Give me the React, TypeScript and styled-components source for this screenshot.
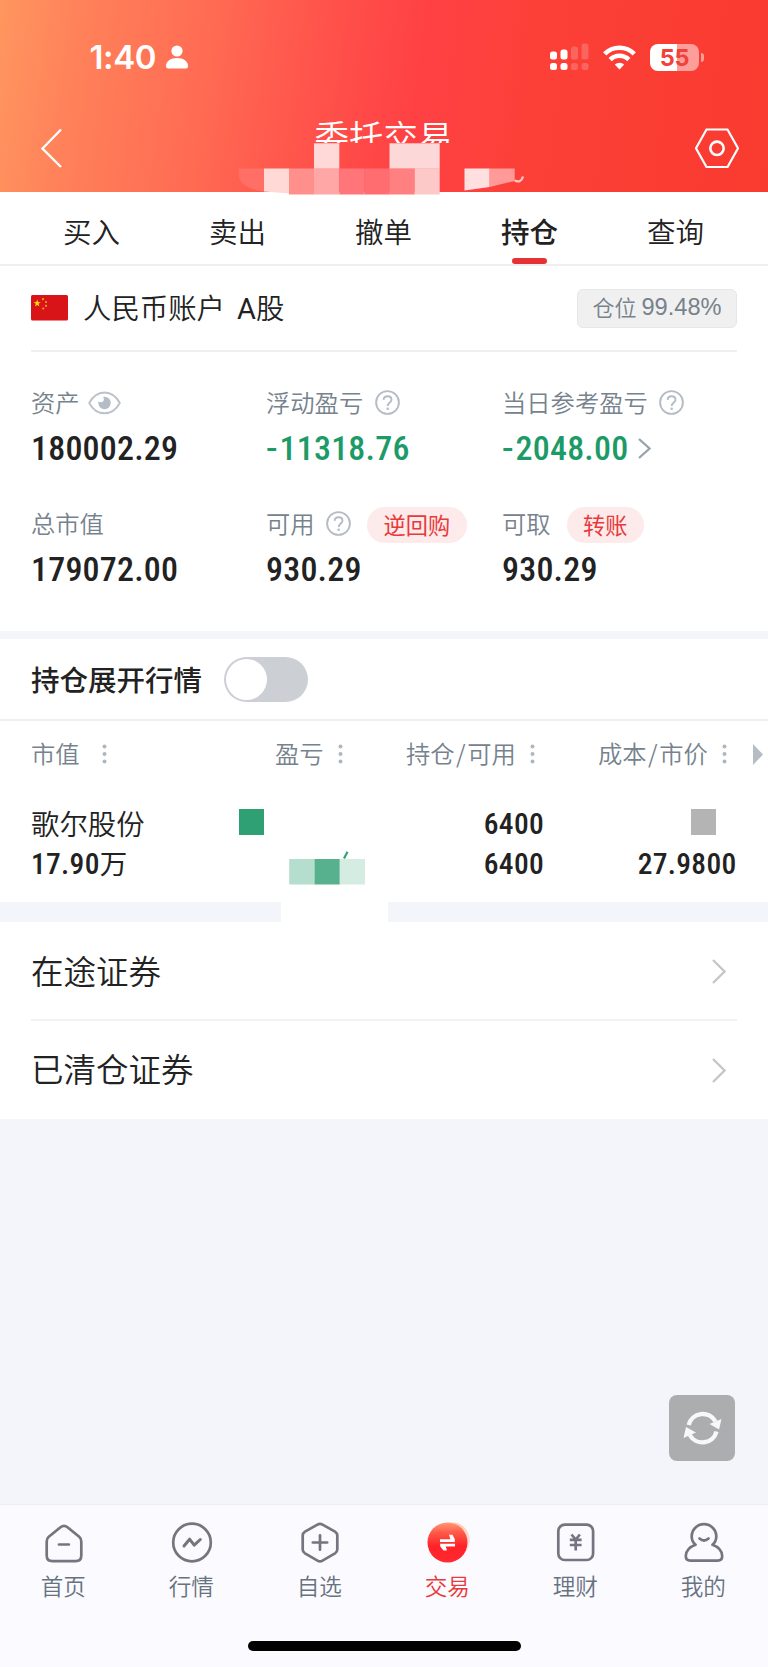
import React from 'react';
import styled, { createGlobalStyle } from 'styled-components';

const CJK = '"Noto Sans CJK SC", sans-serif';
const DIGITS = 'Roboto, "Noto Sans CJK SC", sans-serif';

const GlobalStyle = createGlobalStyle`
  * { box-sizing: border-box; }
  body { margin: 0; background: #f4f5fa; font-family: ${CJK}; color: #222; }
  svg { display: block; flex: none; }
`;

const Screen = styled.main`
  width: 768px;
  height: 1667px;
  display: flex;
  flex-direction: column;
  overflow: hidden;
  background: #f4f5fa;
`;

/* ---------- header ---------- */
const Header = styled.header`
  position: relative;
  height: 192px;
  flex: none;
  background: linear-gradient(98deg, #ff965f 0%, #ff825a 10%, #ff6b53 27%, #ff534b 41%, #ff4144 54%, #fc4038 68%, #f93a2f 100%);
  color: #fff;
`;

const StatusBar = styled.div`
  height: 104px;
  padding: 10.5px 64px 0 89.5px;
  display: flex;
  align-items: center;
  justify-content: space-between;
`;

const StatusGroup = styled.div<{ $gap: number }>`
  display: flex;
  align-items: center;
  gap: ${p => p.$gap}px;
`;

const Clock = styled.span`
  font: 600 33px/40px Inter, sans-serif;
  width: 67.5px;
  letter-spacing: -0.4px;
`;

const Battery = styled.div`
  display: flex;
  align-items: center;
  gap: 2px;
`;

const BatteryBody = styled.div`
  width: 49px;
  height: 27px;
  border-radius: 8px;
  background: linear-gradient(90deg, #fff 55%, rgba(255, 255, 255, 0.5) 55%);
  color: #f2403a;
  font: 700 23.5px/27px Inter, sans-serif;
  letter-spacing: -0.3px;
  text-align: center;
`;

const BatteryTip = styled.div`
  width: 3px;
  height: 9px;
  border-radius: 0 3px 3px 0;
  background: rgba(255, 255, 255, 0.5);
`;

const NavBar = styled.div`
  height: 88px;
  padding: 0 29px 0 41px;
  display: flex;
  align-items: center;
  justify-content: space-between;
`;

const Title = styled.h1`
  margin: 0 0 0 9px;
  align-self: flex-start;
  height: 39px;
  padding-top: 5.5px;
  overflow: hidden;
  font-size: 34.5px;
  line-height: 50px;
  font-weight: 350;
`;

const Mosaic = styled.svg`
  position: absolute;
  left: 230px;
  top: 140px;
`;

/* ---------- tabs ---------- */
const Tabs = styled.nav`
  height: 74px;
  flex: none;
  padding: 0 19.5px 0 18.5px;
  display: flex;
  background: #fff;
  border-bottom: 2px solid #f0f0f1;
`;

const Tab = styled.div<{ $active?: boolean }>`
  flex: 1;
  display: flex;
  flex-direction: column;
  align-items: center;
  justify-content: space-between;
  padding-top: 18.5px;
  font-size: 28.5px;
  line-height: 40px;
  font-weight: ${p => (p.$active ? 500 : 350)};
`;

const TabMark = styled.i`
  width: 35px;
  height: 6px;
  border-radius: 3px;
  background: #e63234;
`;

/* ---------- account ---------- */
const Account = styled.section`
  flex: none;
  height: 365px;
  padding: 0 31px;
  background: #fff;
`;

const AccountHead = styled.div`
  height: 86px;
  display: flex;
  align-items: center;
  border-bottom: 2px solid #efefef;
`;

const AccountName = styled.h2`
  margin: 0 auto 2px 15px;
  font-size: 28.4px;
  line-height: 40px;
  font-weight: 350;
`;

const ShareClass = styled.span`
  margin-left: 12px;
`;

const ShareLetter = styled.span`
  font: 400 29px/38px Roboto, sans-serif;
`;

const Badge = styled.div`
  width: 160px;
  height: 39px;
  margin-top: 1px;
  padding-bottom: 3px;
  border: 1px solid #e6e7e8;
  border-radius: 6px;
  background: #f0f0f0;
  color: #76828d;
  display: flex;
  align-items: center;
  justify-content: center;
  gap: 5px;
  font-size: 22px;
  line-height: 30px;
  font-weight: 350;
`;

const BadgeLabel = styled.span`
  margin-top: -3px;
`;

const BadgeNumber = styled.span`
  font: 23.6px/30px "Liberation Sans", sans-serif;
`;

const StatGrid = styled.div`
  display: grid;
  grid-template-columns: 235px 236px 1fr;
  grid-auto-rows: 121px;
  padding-top: 31px;
`;

const StatLabel = styled.div`
  height: 40px;
  padding-bottom: 2px;
  display: flex;
  align-items: center;
  gap: 11.5px;
  color: #76828d;
  font-size: 24.3px;
  line-height: 36px;
  font-weight: 350;
  svg { margin-top: 1.5px; }
`;

const StatValue = styled.div<{ $down?: boolean }>`
  height: 50px;
  display: flex;
  align-items: center;
  color: ${p => (p.$down ? '#1c9a68' : '#222')};
  font-family: ${DIGITS};
  font-size: 34px;
  font-weight: 500;
  font-stretch: 75%;
  letter-spacing: 0.2px;
  svg { margin-left: 9.5px; }
`;

const Minus = styled.span`
  font-stretch: 100%;
  letter-spacing: 2px;
`;

const Pill = styled.button`
  height: 36px;
  margin: 4px 0 0 4.5px;
  padding: 0 16.5px 3px;
  border: 0;
  border-radius: 18px;
  background: #fdeaea;
  color: #e8393b;
  font: 400 22.2px/32px ${CJK};
`;

const Band = styled.div<{ $h: number }>`
  flex: none;
  height: ${p => p.$h}px;
  background: #f4f5fa;
`;

const BandPatch = styled.div`
  width: 107px;
  height: 100%;
  margin-left: 281px;
  background: #fff;
`;

/* ---------- holdings ---------- */
const ToggleRow = styled.div`
  flex: none;
  height: 82px;
  padding: 0 31px 1px;
  display: flex;
  align-items: center;
  gap: 21.5px;
  background: #fff;
  border-bottom: 2px solid #f0f0f1;
  font-size: 28.5px;
  line-height: 40px;
  font-weight: 500;
`;

const Switch = styled.div`
  width: 84px;
  height: 45px;
  margin-top: 2px;
  padding: 2px;
  border-radius: 23px;
  background: #cccfd4;
`;

const Knob = styled.div`
  width: 41px;
  height: 41px;
  border-radius: 50%;
  background: #fff;
`;

const Holdings = styled.section`
  flex: none;
  height: 181px;
  background: #fff;
`;

const HeadRow = styled.div`
  height: 66px;
  padding: 0 5px 0 31px;
  display: grid;
  grid-template-columns: 244px 131px 192px 1fr auto;
  align-items: center;
  color: #76828d;
  font-size: 24.3px;
  line-height: 36px;
  font-weight: 350;
`;

const HeadCell = styled.div<{ $gap?: number }>`
  display: flex;
  align-items: center;
  gap: ${p => p.$gap ?? 14}px;
`;

const HeadText = styled.span`
  margin-top: -2px;
`;

const Slash = styled.span`
  margin: 0 1.5px;
`;

const HoldRow = styled.div`
  height: 40px;
  padding: 0 31.5px 0 31px;
  display: grid;
  grid-template-columns: 207.5px 1fr 100px 192.5px;
  align-items: center;
  font-family: ${DIGITS};
  font-size: 29.5px;
  font-weight: 500;
  font-stretch: 75%;
  letter-spacing: 0.3px;
  line-height: 40px;
  & + & { margin-top: -2px; }
`;

const HoldBody = styled.div`
  padding-top: 17px;
`;

const StockName = styled.span`
  margin-top: -2px;
  font: 350 28.4px/40px ${CJK};
  letter-spacing: 0;
`;

const Figure = styled.span`
  text-align: right;
`;

const Amount = styled.span`
  display: flex;
  align-items: center;
`;

const WanUnit = styled.span`
  margin-top: -3px;
  font: 400 27.5px/40px ${CJK};
`;

const Tile = styled.i<{ $c: string; $right?: number }>`
  display: block;
  width: 25.3px;
  height: 25.5px;
  background: ${p => p.$c};
  margin: -4px ${p => p.$right ?? 0}px 0 ${p => (p.$right ? 'auto' : '0')};
`;

const TileStrip = styled.svg`
  margin-top: 9px;
`;

/* ---------- links ---------- */
const Links = styled.section`
  flex: none;
  padding: 0 31px;
  background: #fff;
`;

const LinkRow = styled.div`
  height: 97px;
  padding: 0 11px 2px 0;
  display: flex;
  align-items: center;
  justify-content: space-between;
  font-size: 32.5px;
  line-height: 48px;
  font-weight: 350;
  svg { margin-top: 4px; }
  & + & {
    height: 100px;
    padding-bottom: 4px;
    border-top: 2px solid #f2f2f3;
  }
`;

const Blank = styled.div`
  flex: 1;
  display: flex;
  justify-content: flex-end;
  align-items: flex-end;
  padding: 0 33px 43px;
`;

const Refresh = styled.button`
  width: 66px;
  height: 66px;
  padding: 0;
  border: 0;
  border-radius: 8px;
  background: #acadae;
`;

/* ---------- bottom bar ---------- */
const BottomBar = styled.footer`
  flex: none;
  height: 163px;
  display: flex;
  flex-direction: column;
  align-items: center;
  background: #fbfaff;
  border-top: 1px solid #eeeef2;
`;

const BottomItems = styled.div`
  width: 100%;
  height: 136px;
  padding-top: 16px;
  display: flex;
`;

const BottomItem = styled.div<{ $active?: boolean }>`
  flex: 1;
  display: flex;
  flex-direction: column;
  align-items: center;
  gap: 5px;
  color: ${p => (p.$active ? '#e8393b' : '#66727e')};
  font-size: 22.6px;
  line-height: 32px;
  font-weight: 350;
`;

const BottomLabel = styled.span`
  margin-right: 1.5px;
`;

const HomeBar = styled.div`
  width: 273px;
  height: 10px;
  border-radius: 5px;
  background: #000;
`;

/* ---------- icons ---------- */
const Help = () => (
  <svg width="25" height="25" viewBox="0 0 25 25" fill="none" stroke="#b5bcc4" strokeWidth="1.9">
    <circle cx="12.5" cy="12.5" r="11.4" />
    <path d="M8.6 9.9C8.7 7.6 10.3 6.2 12.6 6.2s3.9 1.4 3.9 3.500c0 2.700-3.800 3-3.800 6.200" />
    <circle cx="12.7" cy="18.8" r="1.3" fill="#b5bcc4" stroke="none" />
  </svg>
);

const EyeSvg = styled.svg`
  margin-left: -3.5px;
`;

const Eye = () => (
  <EyeSvg width="33" height="24" viewBox="0 0 33 24" fill="none" stroke="#bcc2cb" strokeWidth="1.9">
    <path d="M1.200 12C5 5 10.500 1.500 16.500 1.500S28 5 31.800 12C28 19 22.500 22.300 16.500 22.300S5 19 1.200 12Z" strokeLinejoin="round" />
    <circle cx="16.500" cy="12" r="6.200" fill="#b5bcc6" stroke="none" />
    <circle cx="12.800" cy="8.300" r="3" fill="#fff" stroke="none" />
  </EyeSvg>
);

const Dots = () => (
  <svg width="5" height="20" viewBox="0 0 5 20" fill="#aeb6be">
    <circle cx="2.5" cy="2.6" r="2" />
    <circle cx="2.5" cy="10" r="2" />
    <circle cx="2.5" cy="17.400" r="2" />
  </svg>
);

const Flag = () => (
  <svg width="37" height="26" viewBox="0 0 37 26">
    <rect width="37" height="25.500" rx="1.500" fill="#d81418" />
    <path d="M6.200 4.600l.9 2.500 2.600.1-2.100 1.600.8 2.600-2.200-1.500-2.200 1.500.8-2.600-2.100-1.600 2.600-.1z" fill="#ffd90f" />
    <g fill="#f0a514">
      <circle cx="12" cy="4.200" r="1.100" /><circle cx="15" cy="7" r="1.100" />
      <circle cx="15" cy="10.800" r="1.100" /><circle cx="12.200" cy="13.500" r="1.100" />
    </g>
  </svg>
);

const Chevron = ({ w, h, c, s }: { w: number; h: number; c: string; s: number }) => (
  <svg width={w} height={h} viewBox={`0 0 ${w} ${h}`} fill="none" stroke={c} strokeWidth={s}>
    <path d={`M1 1L${w - 1.5} ${h / 2}L1 ${h - 1}`} />
  </svg>
);

const line = { fill: 'none', stroke: '#75757f', strokeWidth: 2.7, strokeLinecap: 'round', strokeLinejoin: 'round' } as const;

const HomeIcon = () => (
  <svg width="44" height="44" {...line}>
    <path d="M18.500 6.200L6.800 15.800Q4.700 17.600 4.700 20.500V34.500Q4.700 40.200 10.400 40.200H33.600Q39.300 40.200 39.300 34.500V20.500Q39.300 17.600 37.200 15.800L25.500 6.200Q22 3.500 18.500 6.200Z" />
    <path d="M17 23.500H26.800" />
  </svg>
);
const MarketIcon = () => (
  <svg width="44" height="44" {...line}>
    <circle cx="22" cy="21.500" r="18.800" />
    <path d="M14 25L19.600 18.200L24.200 24.200L30.300 18.500" strokeWidth="3" />
  </svg>
);
const PickIcon = () => (
  <svg width="44" height="44" {...line}>
    <path d="M19.500 3.600Q22 2.200 24.500 3.600L37 10.600Q39.300 12 39.300 14.500V28.500Q39.300 31 37 32.400L24.500 39.600Q22 41 19.500 39.600L7 32.400Q4.700 31 4.700 28.500V14.500Q4.700 12 7 10.600Z" />
    <path d="M22 14.300V28.700M14.800 21.500H29.200" />
  </svg>
);
const TradeIcon = () => (
  <svg width="44" height="44">
    <defs>
      <linearGradient id="trade" x1="0" y1="0" x2="0" y2="1">
        <stop offset="0" stopColor="#ff9a78" /><stop offset=".25" stopColor="#ff5a48" /><stop offset=".6" stopColor="#ff2228" /><stop offset="1" stopColor="#ff2a30" />
      </linearGradient>
      <linearGradient id="ghost" x1="0" y1="0" x2="0" y2="1">
        <stop offset="0" stopColor="#ffc9ad" /><stop offset="1" stopColor="#ffd0d6" stopOpacity=".1" />
      </linearGradient>
    </defs>
    <circle cx="26" cy="19.500" r="18" fill="url(#ghost)" />
    <circle cx="21.500" cy="21.500" r="20" fill="url(#trade)" />
    <path d="M14 18.200H24.500L23 13.800H26.500L28.800 18.200V21H14ZM29 25.400H19.800L21 29.500H17.500L14.200 25.400V22.700H29Z" fill="#fff" />
  </svg>
);
const WealthIcon = () => (
  <svg width="44" height="44" {...line}>
    <rect x="4.300" y="3.600" width="34.800" height="35.400" rx="6.500" />
    <path d="M17.500 13.500L21.700 18.500L25.900 13.500M21.700 19V29.500M15.800 18.800H27.600M15.800 24H27.600" strokeWidth="2.700" strokeLinecap="butt" />
  </svg>
);
const MineIcon = () => (
  <svg width="44" height="44" {...line}>
    <path d="M13.500 23.800C7.500 26 4 29.500 3.800 35Q3.800 39.600 8.400 39.600H35.600Q40.200 39.600 40.200 35C40 29.500 36.500 26 30.500 23.800C33 21.500 34.300 18.500 34.300 15.500A12.300 12.300 0 1 0 9.700 15.500C9.700 18.500 11 21.500 13.500 23.800Z" />
    <path d="M17.500 17.500Q22 21.500 26.500 17.500" />
  </svg>
);

const stats = [
  { label: '资产', value: '180002.29', eye: true },
  { label: '浮动盈亏', value: '11318.76', help: true, down: true },
  { label: '当日参考盈亏', value: '2048.00', help: true, down: true, more: true },
  { label: '总市值', value: '179072.00' },
  { label: '可用', value: '930.29', help: true, action: '逆回购' },
  { label: '可取', value: '930.29', action: '转账' },
];

const bottom = [
  { label: '首页', Icon: HomeIcon },
  { label: '行情', Icon: MarketIcon },
  { label: '自选', Icon: PickIcon },
  { label: '交易', Icon: TradeIcon, active: true },
  { label: '理财', Icon: WealthIcon },
  { label: '我的', Icon: MineIcon },
];

export default function App() {
  return (
    <Screen>
      <GlobalStyle />
      <Header>
        <StatusBar>
          <StatusGroup $gap={8.5}>
            <Clock>1:40</Clock>
            <svg width="22" height="24" fill="#fff">
              <circle cx="11" cy="6" r="5.600" />
              <path d="M0 21C0 16.500 4.500 13 11 13S22 16.500 22 21Q22 23.500 19.500 23.500H2.500Q0 23.500 0 21Z" />
            </svg>
          </StatusGroup>
          <StatusGroup $gap={14}>
            <svg width="39" height="28" fill="#fff">
              <rect x="0" y="8.500" width="7" height="8" rx="2.500" />
              <rect x="10.500" y="6.500" width="7" height="10" rx="2.500" />
              <rect x="21" y="3.500" width="7" height="13" rx="2.500" opacity=".2" />
              <rect x="31.500" y="0.500" width="7" height="16" rx="2.500" opacity=".2" />
              <rect x="0" y="20" width="7" height="7" rx="2.500" />
              <rect x="10.500" y="20" width="7" height="7" rx="2.500" />
              <rect x="21" y="20" width="7" height="7" rx="2.500" opacity=".2" />
              <rect x="31.500" y="20" width="7" height="7" rx="2.500" opacity=".2" />
            </svg>
            <svg width="33" height="25" fill="none" stroke="#fff" strokeWidth="4.600">
              <path d="M1.700 8.800A21 21 0 0 1 31.300 8.800" />
              <path d="M7.200 14.700A13 13 0 0 1 25.800 14.700" />
              <path d="M11.800 19.600A6.800 6.800 0 0 1 21.200 19.600L16.500 24.500Z" fill="#fff" stroke="none" />
            </svg>
            <Battery>
              <BatteryBody>55</BatteryBody>
              <BatteryTip />
            </Battery>
          </StatusGroup>
        </StatusBar>
        <NavBar>
          <svg width="22" height="40" fill="none" stroke="#fff" strokeWidth="2.300">
            <path d="M20 1.500L1.500 20.500L20 39" />
          </svg>
          <Title>委托交易</Title>
          <svg width="44" height="40" fill="none" stroke="#fff" strokeWidth="2.200">
            <path d="M11.500 1.500H32.500L43 20.300L32.500 39H11.500L1 20.300Z" />
            <circle cx="22" cy="20.300" r="6.700" strokeWidth="2.600" />
          </svg>
        </NavBar>
        <Mosaic width="300" height="55">
          <path d="M8.700 28.500H34V51.500Q8.700 48 8.700 34Z" fill="#ff6f66" />
          <path d="M34 28.500H59.300V53.500L34 51.500Z" fill="#ffd9d6" />
          <rect x="59" y="28.500" width="25.300" height="26" fill="#ff8f8b" />
          <rect x="84" y="3.300" width="25.300" height="25.500" fill="#ffd8d8" />
          <rect x="84" y="28.500" width="25.300" height="26" fill="#ffa6a6" />
          <rect x="109.300" y="28.500" width="25.300" height="26" fill="#ff7579" />
          <rect x="134.500" y="28.500" width="25.300" height="26" fill="#ff6d70" />
          <rect x="159.500" y="3.300" width="50.200" height="25.500" fill="#fdd8d8" />
          <rect x="159.500" y="28.500" width="25.300" height="26" fill="#ff8080" />
          <rect x="184.700" y="28.500" width="25" height="26" fill="#fdc8c8" />
          <path d="M234.500 28.500H259.700V47L234.500 50.500Z" fill="#ffdfdf" />
          <path d="M259.500 28.500H284.700V41L259.500 47Z" fill="#ff9a99" />
          <path d="M284.700 40.500Q291 43.500 293 36.500" fill="none" stroke="#ffc5c2" strokeWidth="2.400" />
        </Mosaic>
      </Header>

      <Tabs>
        <Tab>买入</Tab>
        <Tab>卖出</Tab>
        <Tab>撤单</Tab>
        <Tab $active>持仓<TabMark /></Tab>
        <Tab>查询</Tab>
      </Tabs>

      <Account>
        <AccountHead>
          <Flag />
          <AccountName>
            人民币账户
            <ShareClass><ShareLetter>A</ShareLetter>股</ShareClass>
          </AccountName>
          <Badge><BadgeLabel>仓位</BadgeLabel><BadgeNumber>99.48%</BadgeNumber></Badge>
        </AccountHead>
        <StatGrid>
          {stats.map(s => (
            <div key={s.label}>
              <StatLabel>
                {s.label}
                {s.eye && <Eye />}
                {s.help && <Help />}
                {s.action && <Pill>{s.action}</Pill>}
              </StatLabel>
              <StatValue $down={s.down}>
                {s.down && <Minus>-</Minus>}
                {s.value}
                {s.more && <Chevron w={13} h={21} c="#9aa2ab" s={2.3} />}
              </StatValue>
            </div>
          ))}
        </StatGrid>
      </Account>

      <Band $h={8} />
      <ToggleRow>
        持仓展开行情
        <Switch><Knob /></Switch>
      </ToggleRow>

      <Holdings>
        <HeadRow>
          <HeadCell $gap={22}><HeadText>市值</HeadText><Dots /></HeadCell>
          <HeadCell><HeadText>盈亏</HeadText><Dots /></HeadCell>
          <HeadCell><HeadText>持仓<Slash>/</Slash>可用</HeadText><Dots /></HeadCell>
          <HeadCell><HeadText>成本<Slash>/</Slash>市价</HeadText><Dots /></HeadCell>
          <svg width="10" height="21" fill="#b5bcc4"><path d="M0 0L10 10.500L0 21Z" /></svg>
        </HeadRow>
        <HoldBody>
          <HoldRow>
            <StockName>歌尔股份</StockName>
            <Tile $c="#2f9f74" />
            <Figure>6400</Figure>
            <Tile $c="#b4b4b4" $right={20.5} />
          </HoldRow>
          <HoldRow>
            <Amount>17.90<WanUnit>万</WanUnit></Amount>
            <TileStrip width="127" height="34">
              <rect x="50.200" y="8" width="25.300" height="25.500" fill="#b5dece" />
              <rect x="75.500" y="8" width="25.300" height="25.500" fill="#57b18e" />
              <rect x="100.800" y="8" width="25.200" height="25.500" fill="#d5ece2" />
              <path d="M105 7.500L108.500 0.800" stroke="#2fa377" strokeWidth="2.200" />
            </TileStrip>
            <Figure>6400</Figure>
            <Figure>27.9800</Figure>
          </HoldRow>
        </HoldBody>
      </Holdings>

      <Band $h={20}><BandPatch /></Band>
      <Links>
        <LinkRow>在途证券<Chevron w={14} h={25} c="#c4c6c9" s={2.3} /></LinkRow>
        <LinkRow>已清仓证券<Chevron w={14} h={25} c="#c4c6c9" s={2.3} /></LinkRow>
      </Links>

      <Blank>
        <Refresh aria-label="刷新">
          <svg width="66" height="66" fill="none" stroke="#f8f8f9" strokeWidth="4.400">
            <path d="M19.700 30A14.500 14.500 0 0 1 46.500 26.500" />
            <path d="M47.500 36.500A14.500 14.500 0 0 1 20.800 40" />
            <path d="M52.500 24L50 34.500L40.500 29Z" fill="#f8f8f9" stroke="none" />
            <path d="M14.500 43L17 32L27 37.500Z" fill="#f8f8f9" stroke="none" />
          </svg>
        </Refresh>
      </Blank>

      <BottomBar>
        <BottomItems>
          {bottom.map(({ label, Icon, active }) => (
            <BottomItem key={label} $active={active}>
              <Icon />
              <BottomLabel>{label}</BottomLabel>
            </BottomItem>
          ))}
        </BottomItems>
        <HomeBar />
      </BottomBar>
    </Screen>
  );
}
